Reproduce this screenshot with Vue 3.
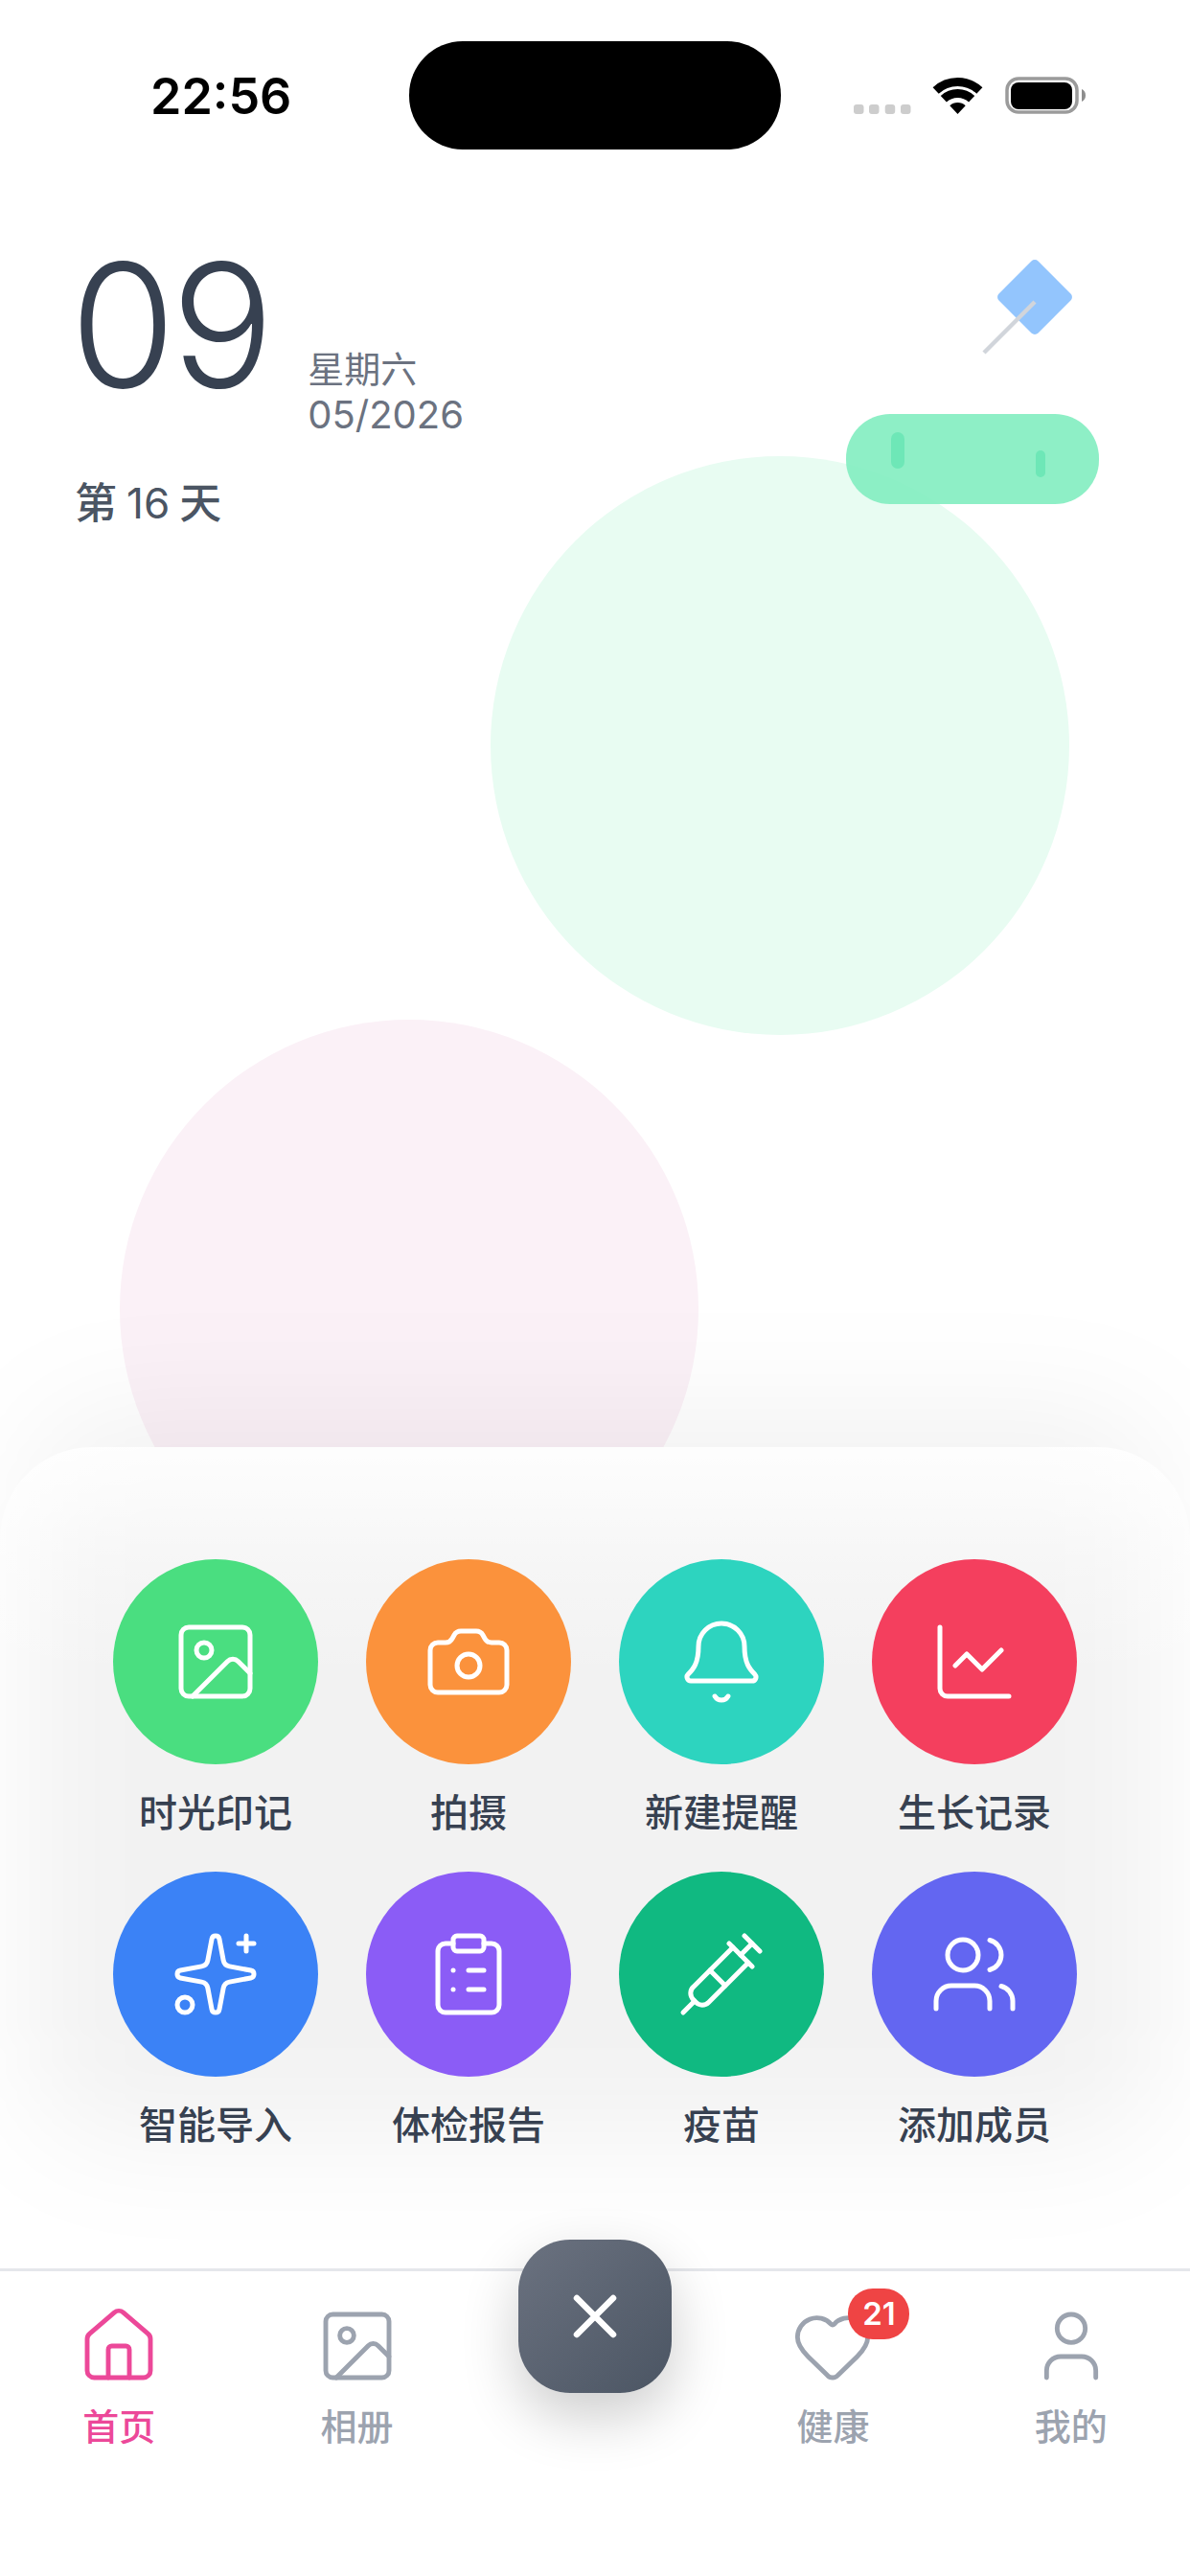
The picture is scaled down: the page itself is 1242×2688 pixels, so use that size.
<script setup>
const actions = [
  { label: '时光印记', color: '#4ade80', r: [[3, 3, 18, 18, 2]], c: [[9, 9, 2]], p: ['m21 15-3.086-3.086a2 2 0 0 0-2.828 0L6 21'] },
  { label: '拍摄', color: '#fb923c', c: [[12, 13, 3]], p: ['M13.997 4a2 2 0 0 1 1.76 1.05l.486.9A2 2 0 0 0 18.003 7H20a2 2 0 0 1 2 2v9a2 2 0 0 1-2 2H4a2 2 0 0 1-2-2V9a2 2 0 0 1 2-2h1.997a2 2 0 0 0 1.759-1.048l.489-.904A2 2 0 0 1 10.004 4z'] },
  { label: '新建提醒', color: '#2dd4bf', p: ['M10.268 21a2 2 0 0 0 3.464 0', 'M3.262 15.326A1 1 0 0 0 4 17h16a1 1 0 0 0 .74-1.673C19.41 13.956 18 12.499 18 8A6 6 0 0 0 6 8c0 4.499-1.411 5.956-2.738 7.326'] },
  { label: '生长记录', color: '#f43f5e', p: ['M3 3v16a2 2 0 0 0 2 2h16', 'm19 9-5 5-4-4-3 3'] },
  { label: '智能导入', color: '#3b82f6', c: [[4, 20, 2]], p: ['M11.017 2.814a1 1 0 0 1 1.966 0l1.051 5.558a2 2 0 0 0 1.594 1.594l5.558 1.051a1 1 0 0 1 0 1.966l-5.558 1.051a2 2 0 0 0-1.594 1.594l-1.051 5.558a1 1 0 0 1-1.966 0l-1.051-5.558a2 2 0 0 0-1.594-1.594l-5.558-1.051a1 1 0 0 1 0-1.966l5.558-1.051a2 2 0 0 0 1.594-1.594z', 'M20 2v4', 'M22 4h-4'] },
  { label: '体检报告', color: '#8b5cf6', r: [[8, 2, 8, 4, 1]], p: ['M16 4h2a2 2 0 0 1 2 2v14a2 2 0 0 1-2 2H6a2 2 0 0 1-2-2V6a2 2 0 0 1 2-2h2', 'M12 11h4', 'M12 16h4', 'M8 11h.01', 'M8 16h.01'] },
  { label: '疫苗', color: '#10b981', p: ['m18 2 4 4', 'm17 7 3-3', 'M19 9 8.7 19.3c-1 1-2.5 1-3.4 0l-.6-.6c-1-1-1-2.5 0-3.4L15 5', 'm9 11 4 4', 'm5 19-3 3', 'm14 4 6 6'] },
  { label: '添加成员', color: '#6366f1', c: [[9, 7, 4]], p: ['M16 21v-2a4 4 0 0 0-4-4H6a4 4 0 0 0-4 4v2', 'M16 3.128a4 4 0 0 1 0 7.744', 'M22 21v-2a4 4 0 0 0-3-3.87'] },
]

const tabs = [
  { label: '首页', active: true, p: ['M15 21v-8a1 1 0 0 0-1-1h-4a1 1 0 0 0-1 1v8', 'M3 10a2 2 0 0 1 .709-1.528l7-5.999a2 2 0 0 1 2.582 0l7 5.999A2 2 0 0 1 21 10v9a2 2 0 0 1-2 2H5a2 2 0 0 1-2-2z'] },
  { label: '相册', r: [[3, 3, 18, 18, 2]], c: [[9, 9, 2]], p: ['m21 15-3.086-3.086a2 2 0 0 0-2.828 0L6 21'] },
  { spacer: true },
  { label: '健康', badge: 21, p: ['M2 9.5a5.5 5.5 0 0 1 9.591-3.676.56.56 0 0 0 .818 0A5.49 5.49 0 0 1 22 9.5c0 2.29-1.5 4-3 5.5l-5.492 5.313a2 2 0 0 1-3 .019L5 15c-1.5-1.5-3-3.2-3-5.5'] },
  { label: '我的', c: [[12, 7, 4]], p: ['M19 21v-2a4 4 0 0 0-4-4H9a4 4 0 0 0-4 4v2'] },
]
</script>

<template>
  <div class="app">
    <header class="status">
      <span class="time">22:56</span>
      <div class="island"></div>
      <svg class="status-icons" width="242" height="40" viewBox="0 0 242 40">
        <g fill="#cdcdcd">
          <rect x="0" y="29" width="10.5" height="10" rx="3" />
          <rect x="16" y="29" width="10.5" height="10" rx="3" />
          <rect x="32.7" y="29" width="10.5" height="10" rx="3" />
          <rect x="49" y="29" width="10.5" height="10" rx="3" />
        </g>
        <path d="M85.65 14.5A33.5 33.5 0 0 1 131.35 14.5" fill="none" stroke="#000" stroke-width="9" />
        <path d="M93.84 23.3A21.5 21.5 0 0 1 123.16 23.3" fill="none" stroke="#000" stroke-width="9" />
        <path d="M108.5 39 100.3 30.2A12 12 0 0 1 116.7 30.2Z" fill="#000" />
        <rect x="160" y="2" width="73" height="35" rx="12" fill="none" stroke="#9b9b9b" stroke-width="3.5" />
        <rect x="164" y="6" width="64" height="28" rx="8" fill="#000" />
        <path d="M238 13c2.500.8 4 3.500 4 6.500s-1.500 5.700-4 6.500z" fill="#8e8e8e" />
      </svg>
    </header>

    <main class="stage">
      <div class="blob blob-green"></div>
      <div class="blob blob-pink"></div>
      <svg class="pin" width="120" height="120" viewBox="0 0 120 120">
        <rect x="44" y="3" width="58" height="58" rx="5" transform="rotate(45 73 32)" fill="#93c5fd" />
        <path d="M73 37 20 90" stroke="#d1d5db" stroke-width="4.500" />
      </svg>
      <div class="tape">
        <i class="tape-mark tape-mark-a"></i>
        <i class="tape-mark tape-mark-b"></i>
      </div>

      <section class="date">
        <div class="date-row">
          <span class="day">09</span>
          <div class="date-meta">
            <span class="weekday">星期六</span>
            <span class="month">05/2026</span>
          </div>
        </div>
        <div class="count"><span>第</span><span class="count-num">16</span><span>天</span></div>
      </section>
    </main>

    <section class="panel">
      <div class="panel-base"></div>
      <div class="panel-shadow"></div>
      <div class="panel-glass"></div>
      <div class="grid">
        <div v-for="a in actions" :key="a.label" class="action">
          <div class="action-circle" :style="{ background: a.color }">
            <svg width="96" height="96" viewBox="0 0 24 24" fill="none" stroke="#fff" stroke-width="1.25" stroke-linecap="round" stroke-linejoin="round">
              <rect v-for="(r, i) in a.r" :key="'r' + i" :x="r[0]" :y="r[1]" :width="r[2]" :height="r[3]" :rx="r[4]" />
              <circle v-for="(c, i) in a.c" :key="'c' + i" :cx="c[0]" :cy="c[1]" :r="c[2]" />
              <path v-for="(d, i) in a.p" :key="'p' + i" :d="d" />
            </svg>
          </div>
          <span class="action-label">{{ a.label }}</span>
        </div>
      </div>
    </section>

    <nav class="tabbar">
      <template v-for="(t, n) in tabs" :key="n">
        <div v-if="t.spacer" class="tab-fab-slot">
          <button class="fab" type="button" aria-label="关闭">
            <svg width="52" height="52" viewBox="0 0 52 52" fill="none" stroke="#fff" stroke-width="6.500" stroke-linecap="round">
              <path d="M7 7 45 45M45 7 7 45" />
            </svg>
          </button>
        </div>
        <div v-else class="tab" :class="{ 'tab-active': t.active }">
          <div class="tab-icon">
            <svg width="88" height="88" viewBox="0 0 24 24" fill="none" stroke="currentColor" stroke-width="1.33" stroke-linecap="round" stroke-linejoin="round">
              <rect v-for="(r, i) in t.r" :key="'r' + i" :x="r[0]" :y="r[1]" :width="r[2]" :height="r[3]" :rx="r[4]" />
              <circle v-for="(c, i) in t.c" :key="'c' + i" :cx="c[0]" :cy="c[1]" :r="c[2]" />
              <path v-for="(d, i) in t.p" :key="'p' + i" :d="d" />
            </svg>
            <span v-if="t.badge" class="badge">{{ t.badge }}</span>
          </div>
          <span class="tab-label">{{ t.label }}</span>
        </div>
      </template>
    </nav>
  </div>
</template>

<style scoped>
.app {
  position: relative;
  width: 1242px;
  height: 2688px;
  display: flex;
  flex-direction: column;
  overflow: hidden;
  background: #fff;
  font-family: Inter, "Noto Sans CJK SC", sans-serif;
}

.status {
  flex: none;
  height: 180px;
  display: flex;
  align-items: flex-start;
  padding-top: 43px;
  box-sizing: border-box;
}
.time {
  flex: none;
  width: 427px;
  box-sizing: border-box;
  padding-left: 157px;
  padding-top: 26px;
  font-size: 52px;
  line-height: 63px;
  font-weight: 600;
  color: #000;
}
.island {
  flex: none;
  width: 388px;
  height: 113px;
  border-radius: 56px;
  background: #000;
}
.status-icons {
  flex: none;
  margin-left: 76px;
  margin-top: 37px;
}

.stage {
  position: relative;
  flex: 1;
  min-height: 0;
}
.blob {
  position: absolute;
  width: 604px;
  height: 604px;
  border-radius: 50%;
}
.blob-green {
  left: 512px;
  top: 296px;
  background: #e8fcf2;
}
.blob-pink {
  left: 125px;
  top: 884px;
  background: #fbf1f7;
}
.pin {
  position: absolute;
  left: 1007px;
  top: 98px;
  overflow: visible;
}
.tape {
  position: absolute;
  left: 883px;
  top: 252px;
  width: 264px;
  height: 94px;
  border-radius: 46px;
  background: rgba(130, 237, 192, 0.9);
}
.tape-mark {
  position: absolute;
  background: #6ee7b7;
  border-radius: 7px;
}
.tape-mark-a {
  left: 47px;
  top: 19px;
  width: 14px;
  height: 38px;
}
.tape-mark-b {
  left: 198px;
  top: 38px;
  width: 10px;
  height: 28px;
}

.date {
  position: relative;
  padding: 64px 0 0 78px;
}
.date-row {
  display: flex;
  align-items: flex-end;
}
.day {
  margin-left: -5px;
  font-size: 179px;
  line-height: 190px;
  font-weight: 300;
  letter-spacing: -5px;
  color: #374151;
}
.date-meta {
  display: flex;
  flex-direction: column;
  margin-left: 40px;
  margin-bottom: -23px;
  color: #6b7280;
}
.weekday {
  font-size: 38px;
  line-height: 48px;
}
.month {
  font-size: 40px;
  line-height: 48px;
}
.count {
  display: flex;
  gap: 10px;
  margin-top: 63px;
  font-size: 44px;
  line-height: 56px;
  color: #4b5563;
}
.count span:not(.count-num) {
  font-weight: 500;
}

.panel {
  position: relative;
  flex: none;
  height: 857px;
  box-sizing: border-box;
  padding: 117px 93px 0;
}
.panel-base {
  position: absolute;
  inset: 0;
  border-radius: 96px 96px 0 0;
  background: rgba(255, 255, 255, 0.96);
}
.panel-shadow {
  position: absolute;
  left: 30px;
  right: 30px;
  top: -40px;
  bottom: 130px;
  border-radius: 96px;
  background: rgba(0, 0, 0, 0.05);
  filter: blur(60px);
}
.panel-glass {
  position: absolute;
  inset: 0;
  border-radius: 96px 96px 0 0;
  background: linear-gradient(180deg, rgba(255, 255, 255, 0.85) 0, rgba(255, 255, 255, 0.3) 130px, rgba(255, 255, 255, 0) 240px);
}
.grid {
  position: relative;
  display: grid;
  grid-template-columns: repeat(4, 264px);
  row-gap: 31px;
}
.action {
  display: flex;
  flex-direction: column;
  align-items: center;
}
.action-circle {
  width: 214px;
  height: 214px;
  border-radius: 50%;
  display: flex;
  align-items: center;
  justify-content: center;
}
.action-label {
  margin-top: 21px;
  font-size: 40px;
  line-height: 60px;
  font-weight: 500;
  color: #374151;
}

.tabbar {
  position: relative;
  flex: none;
  height: 321px;
  box-sizing: border-box;
  display: grid;
  grid-template-columns: repeat(5, 1fr);
  border-top: 3px solid #e5e7eb;
  background: #fff;
}
.tab {
  display: flex;
  flex-direction: column;
  align-items: center;
  padding-top: 34px;
  color: #9ca3af;
}
.tab-active {
  color: #ec4899;
}
.tab-icon {
  position: relative;
  width: 88px;
  height: 88px;
}
.tab-icon svg {
  display: block;
}
.tab-label {
  margin-top: 12px;
  font-size: 38px;
  line-height: 56px;
  font-weight: 500;
}
.badge {
  position: absolute;
  left: 60px;
  top: -16px;
  width: 64px;
  height: 53px;
  border-radius: 26px;
  background: #ef4444;
  color: #fff;
  font-size: 33px;
  line-height: 53px;
  font-weight: 600;
  text-align: center;
}
.tab-fab-slot {
  position: relative;
}
.fab {
  position: absolute;
  left: 44px;
  top: -33px;
  width: 160px;
  height: 160px;
  padding: 0;
  border: 0;
  border-radius: 54px;
  background: linear-gradient(135deg, #6b7280, #4b5563);
  box-shadow: 0 24px 60px rgba(0, 0, 0, 0.2);
  display: flex;
  align-items: center;
  justify-content: center;
}
</style>

<style>
html,
body {
  margin: 0;
  background: #fff;
}
</style>
